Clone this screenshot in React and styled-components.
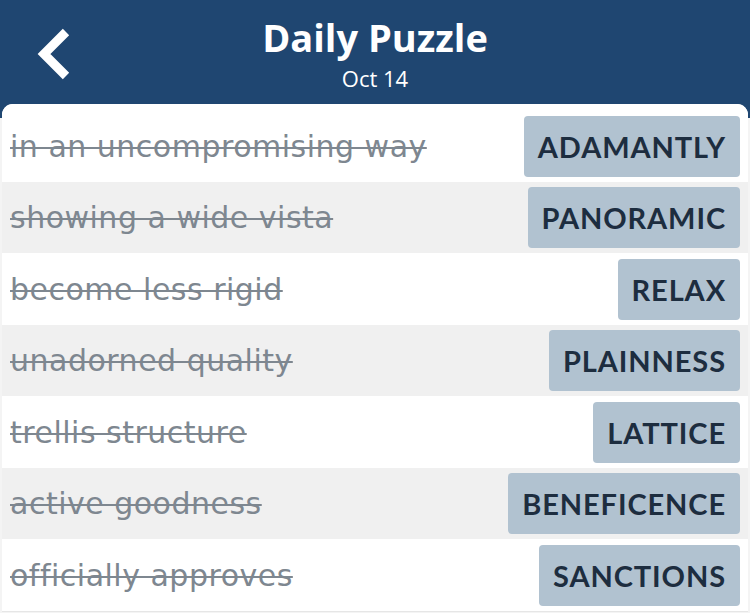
import React from 'react'
import styled, { createGlobalStyle } from 'styled-components'

const GlobalStyle = createGlobalStyle`
  html, body {
    margin: 0;
    padding: 0;
    background: #f4f4f4;
  }
  body {
    font-family: Lato, "Noto Sans", sans-serif;
  }
`

const Page = styled.div`
  width: 750px;
  height: 613px;
  overflow: hidden;
  background: #f4f4f4;
`

const Header = styled.header`
  background: #1f4671;
  height: 118px;
  display: flex;
  flex-direction: column;
  align-items: center;
  position: relative;
  padding-top: 13px;
  box-sizing: border-box;
  color: white;
`

const BackButton = styled.button`
  position: absolute;
  left: 30px;
  top: 24px;
  width: 48px;
  height: 60px;
  padding: 0;
  border: none;
  background: none;
  display: flex;
  align-items: center;
  justify-content: center;
`

const Title = styled.h1`
  margin: 0;
  font-family: "Open Sans", Lato, sans-serif;
  font-size: 38px;
  font-weight: 700;
  line-height: 48px;
  letter-spacing: 0;
`

const Subtitle = styled.div`
  margin-top: 3px;
  font-family: "Open Sans", Lato, sans-serif;
  font-size: 22px;
  line-height: 28px;
`

const Card = styled.div`
  margin: -14px 2px 0;
  background: white;
  border-radius: 11px 11px 0 0;
  overflow: hidden;
  position: relative;
  border-bottom: 1px solid #e6e6e6;
`

const Row = styled.div`
  height: ${({ h }) => h}px;
  box-sizing: border-box;
  display: flex;
  align-items: center;
  justify-content: space-between;
  padding: ${({ first }) => (first ? 7 : 0)}px 8px 0 8px;
  background: ${({ shaded }) => (shaded ? '#f0f0f0' : 'white')};
`

const Clue = styled.span`
  font-family: "DejaVu Sans", "Open Sans", sans-serif;
  font-size: 30px;
  letter-spacing: 0.5px;
  color: #7e8790;
  text-decoration: line-through;
  text-decoration-thickness: 2px;
  white-space: nowrap;
`

const Answer = styled.div`
  height: 61px;
  padding: 0 14px;
  display: flex;
  align-items: center;
  background: #b1c2d0;
  border-radius: 4px;
  color: #1d2d3f;
  font-size: 29px;
  font-weight: 700;
  letter-spacing: 0.9px;
`

const rows = [
  ['in an uncompromising way', 'ADAMANTLY'],
  ['showing a wide vista', 'PANORAMIC'],
  ['become less rigid', 'RELAX'],
  ['unadorned quality', 'PLAINNESS'],
  ['trellis structure', 'LATTICE'],
  ['active goodness', 'BENEFICENCE'],
  ['officially approves', 'SANCTIONS'],
]

function Chevron() {
  return (
    <svg width="40" height="52" viewBox="0 0 40 52">
      <path d="M32 4 L10 26 L32 48" fill="none" stroke="white" strokeWidth="9" strokeLinejoin="miter" />
    </svg>
  )
}

export default function App() {
  return (
    <Page>
      <GlobalStyle />
      <Header>
        <BackButton aria-label="Back">
          <Chevron />
        </BackButton>
        <Title>Daily Puzzle</Title>
        <Subtitle>Oct 14</Subtitle>
      </Header>
      <Card>
        {rows.map(([clue, answer], i) => (
          <Row key={answer} first={i === 0} shaded={i % 2 === 1} h={i === 0 ? 78 : i % 2 ? 71 : 72}>
            <Clue>{clue}</Clue>
            <Answer>{answer}</Answer>
          </Row>
        ))}
      </Card>
    </Page>
  )
}
